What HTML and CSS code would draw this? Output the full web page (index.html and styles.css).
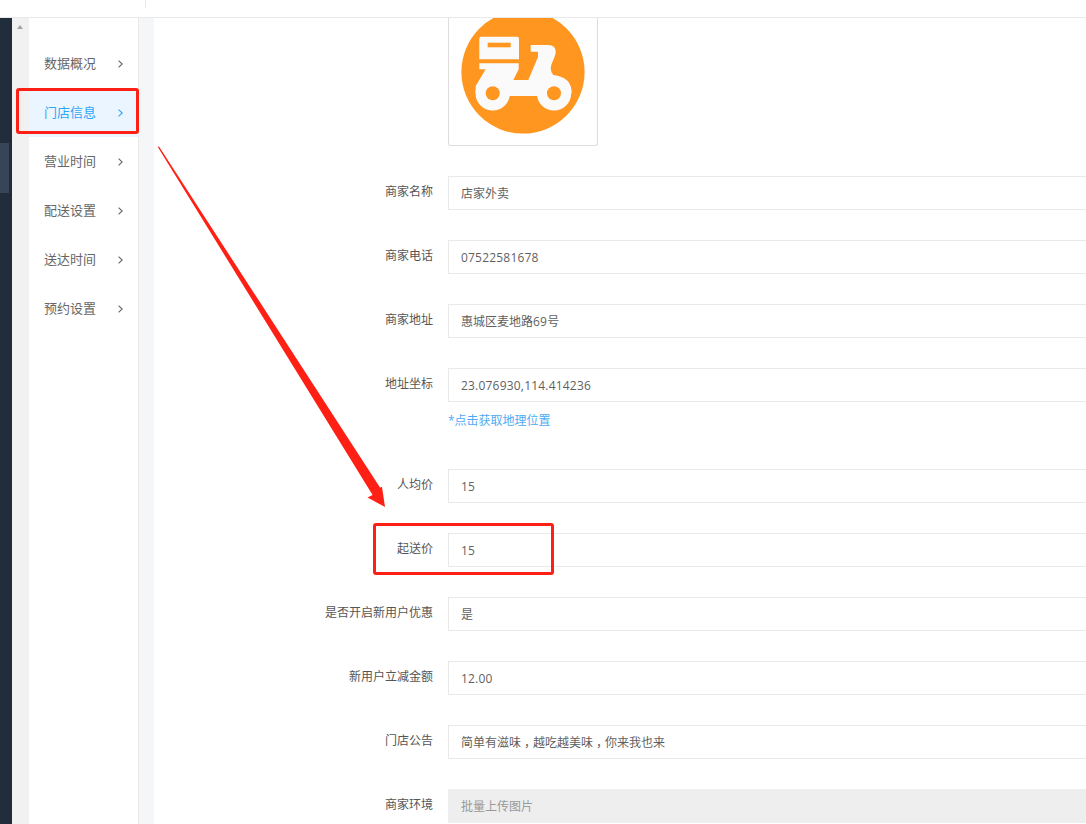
FILE: index.html
```html
<!DOCTYPE html>
<html lang="zh-CN">
<head>
<meta charset="utf-8">
<title>门店信息</title>
<link rel="stylesheet" href="styles.css">
</head>
<body>
<header class="topbar"><span class="topbar-divider"></span></header>
<div class="layout">
  <aside class="rail"><div class="rail-item"></div></aside>
  <div class="scrollbar"><span class="scroll-up"></span></div>
  <nav class="menu">
    <a class="menu-item"><span>数据概况</span><svg class="chev" viewBox="0 0 5 8"><path d="M.6.6L4.200 4 .6 7.400"/></svg></a>
    <a class="menu-item active"><span>门店信息</span><svg class="chev" viewBox="0 0 5 8"><path d="M.6.6L4.200 4 .6 7.400"/></svg></a>
    <a class="menu-item"><span>营业时间</span><svg class="chev" viewBox="0 0 5 8"><path d="M.6.6L4.200 4 .6 7.400"/></svg></a>
    <a class="menu-item"><span>配送设置</span><svg class="chev" viewBox="0 0 5 8"><path d="M.6.6L4.200 4 .6 7.400"/></svg></a>
    <a class="menu-item"><span>送达时间</span><svg class="chev" viewBox="0 0 5 8"><path d="M.6.6L4.200 4 .6 7.400"/></svg></a>
    <a class="menu-item"><span>预约设置</span><svg class="chev" viewBox="0 0 5 8"><path d="M.6.6L4.200 4 .6 7.400"/></svg></a>
  </nav>
  <div class="gutter"></div>
  <main class="content">
    <div class="logo-row">
      <div class="logo-box">
        <svg class="logo" viewBox="0 8 124 116">
          <circle cx="62" cy="62" r="61.6" fill="#ff9620"/>
          <path fill="#fafafa" d="M20 26.7H56a2 2 0 0 1 2 2V49.3H18.3V28.7a2 2 0 0 1 1.7-2z"/>
          <rect x="26.7" y="32.7" width="23" height="4.6" fill="#ff9620"/>
          <path fill="#fafafa" d="M18.3 53.3H57.7V59.3L52.3 70H67.3L77 47V41.7H69.7V35H87.3Q94.7 35 94.7 42Q94.7 45 91 53Q88 60 92.3 65Q110.7 67 110.7 83L93 86H31.7L14.7 83V76L24.7 59.3H18.3Z"/>
          <circle cx="31.7" cy="83.3" r="17.2" fill="#fafafa"/>
          <circle cx="93" cy="83.3" r="17.2" fill="#fafafa"/>
          <circle cx="31.7" cy="83.3" r="7" fill="#ff9620"/>
          <circle cx="93" cy="83.3" r="7" fill="#ff9620"/>
        </svg>
      </div>
    </div>
    <div class="row"><label class="label">商家名称</label><div class="field">店家外卖</div></div>
    <div class="row"><label class="label">商家电话</label><div class="field num">07522581678</div></div>
    <div class="row"><label class="label">商家地址</label><div class="field">惠城区麦地路<span class="num">69</span>号</div></div>
    <div class="row row-link">
      <label class="label">地址坐标</label>
      <div class="field-wrap">
        <div class="field num">23.076930,114.414236</div>
        <a class="hint">*点击获取地理位置</a>
      </div>
    </div>
    <div class="row"><label class="label">人均价</label><div class="field num">15</div></div>
    <div class="row"><label class="label">起送价</label><div class="field num">15</div></div>
    <div class="row"><label class="label">是否开启新用户优惠</label><div class="field">是</div></div>
    <div class="row"><label class="label">新用户立减金额</label><div class="field num">12.00</div></div>
    <div class="row"><label class="label">门店公告</label><div class="field">简单有滋味<span class="comma">，</span>越吃越美味<span class="comma">，</span>你来我也来</div></div>
    <div class="row"><label class="label">商家环境</label><div class="field field-disabled">批量上传图片</div></div>
  </main>
</div>
<div class="mark mark-menu"></div>
<div class="mark mark-price"></div>
<svg class="arrow" viewBox="0 0 1086 824"><path fill="#ff2015" d="M157.800 147L159 146.500L380 487.500L382 487L385 507L367.500 497.500L372.600 495Z"/></svg>
</body>
</html>
```
FILE: styles.css
```css
* { box-sizing: border-box; }
html, body { margin: 0; height: 100%; }
body {
  position: relative;
  height: 824px;
  overflow: hidden;
  background: #fff;
  font-family: "Open Sans", "Noto Sans CJK SC", sans-serif;
  font-size: 12px;
  color: #666;
}
.topbar {
  height: 18px;
  background: #fff;
  border-bottom: 1px solid #e9e9e9;
  padding-left: 145px;
}
.topbar-divider { display: block; width: 1px; height: 8px; background: #e6e6e6; }
.layout { display: flex; height: 806px; }
.rail { width: 12px; background: #222d3b; padding-top: 125px; }
.rail-item { width: 9px; height: 50px; background: #374559; }
.scrollbar { width: 17px; background: #f1f1f1; padding: 7px 0 0 5px; }
.scroll-up {
  display: block;
  width: 0;
  height: 0;
  border-left: 3.500px solid transparent;
  border-right: 3.500px solid transparent;
  border-bottom: 4px solid #a3a3a3;
}
.menu { width: 110px; padding-top: 21px; border-right: 1px solid #e9e9e9; background: #fff; }
.menu-item {
  display: flex;
  align-items: center;
  justify-content: space-between;
  height: 49px;
  padding: 0 15px 3px;
  font-size: 13px;
  color: #666;
}
.menu-item.active { background: #ebf5ff; color: #2da6f6; }
.chev { width: 5px; height: 8px; margin-top: 3px; flex: none; fill: none; stroke: currentColor; stroke-width: 1.100; }
.gutter { width: 15px; background: #f5f6f8; }
.content { flex: 1; min-width: 0; overflow: hidden; background: #fff; }
.logo-row { padding-left: 294px; margin-bottom: 30px; }
.logo-box {
  width: 150px;
  height: 128px;
  border: 1px solid #ddd;
  border-top: 0;
  border-radius: 0 0 3px 3px;
  display: flex;
  justify-content: center;
  align-items: flex-start;
}
.logo { display: block; width: 124px; height: 116px; flex: none; margin-right: 1px; }
.row { display: flex; height: 34px; margin-bottom: 30px; }
.row-link { margin-bottom: 67px; }
.label {
  width: 280px;
  margin-right: 14px;
  padding-right: 1px;
  flex: none;
  text-align: right;
  line-height: 32px;
  color: #555;
}
.field-wrap { flex: none; width: 700px; }
.field {
  flex: none;
  width: 700px;
  height: 34px;
  padding: 0 12px;
  line-height: 34px;
  background: #fff;
  border: 1px solid #e9e9e9;
  color: #5f5f5f;
}
.num { letter-spacing: .2px; }
.comma { padding-left: 3px; letter-spacing: -3px; }
.field-disabled { background: #eee; border-color: #eee; color: #999; }
.hint { display: block; margin-top: 10px; line-height: 18px; color: #4dabf5; }
.mark { position: absolute; border: 3px solid #ff2015; border-radius: 3px; }
.mark-menu { left: 16px; top: 88px; width: 123px; height: 46px; }
.mark-price { left: 373px; top: 523px; width: 181px; height: 52px; }
.arrow { position: absolute; left: 0; top: 0; width: 1086px; height: 824px; pointer-events: none; }
```
